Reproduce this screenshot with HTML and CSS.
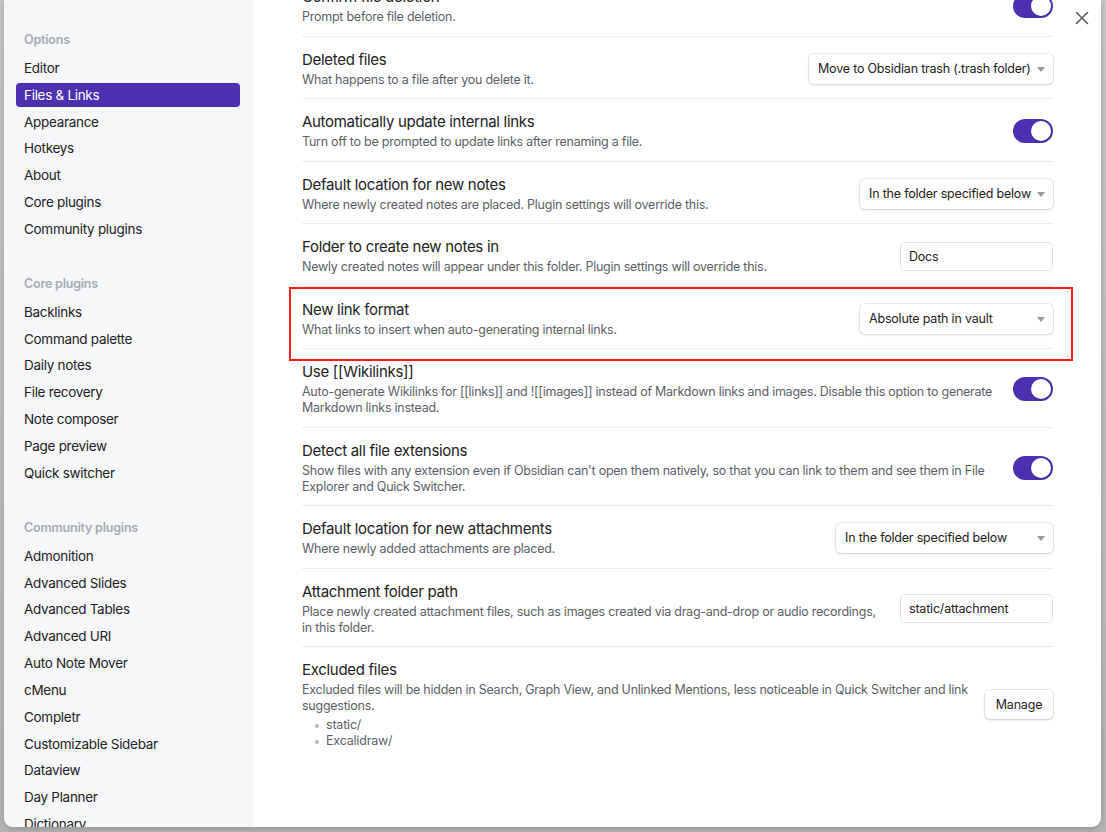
FILE: index.html
```html
<!DOCTYPE html>
<html lang="en">
<head>
<meta charset="utf-8">
<title>Settings - Files &amp; Links</title>
<link rel="stylesheet" href="styles.css">
</head>
<body>
<div class="backdrop">
  <div class="modal">
    <nav class="sidebar">
      <div class="nav-group">
        <div class="nav-header">Options</div>
        <div class="nav-item">Editor</div>
        <div class="nav-item active">Files &amp; Links</div>
        <div class="nav-item">Appearance</div>
        <div class="nav-item">Hotkeys</div>
        <div class="nav-item">About</div>
        <div class="nav-item">Core plugins</div>
        <div class="nav-item">Community plugins</div>
      </div>
      <div class="nav-group">
        <div class="nav-header">Core plugins</div>
        <div class="nav-item">Backlinks</div>
        <div class="nav-item">Command palette</div>
        <div class="nav-item">Daily notes</div>
        <div class="nav-item">File recovery</div>
        <div class="nav-item">Note composer</div>
        <div class="nav-item">Page preview</div>
        <div class="nav-item">Quick switcher</div>
      </div>
      <div class="nav-group">
        <div class="nav-header">Community plugins</div>
        <div class="nav-item">Admonition</div>
        <div class="nav-item">Advanced Slides</div>
        <div class="nav-item">Advanced Tables</div>
        <div class="nav-item">Advanced URI</div>
        <div class="nav-item">Auto Note Mover</div>
        <div class="nav-item">cMenu</div>
        <div class="nav-item">Completr</div>
        <div class="nav-item">Customizable Sidebar</div>
        <div class="nav-item">Dataview</div>
        <div class="nav-item">Day Planner</div>
        <div class="nav-item">Dictionary</div>
      </div>
    </nav>

    <main class="content">
      <div class="settings">
        <div class="setting">
          <div class="info">
            <div class="name">Confirm file deletion</div>
            <div class="desc">Prompt before file deletion.</div>
          </div>
          <div class="toggle on"><span class="knob"></span></div>
        </div>

        <div class="setting">
          <div class="info">
            <div class="name">Deleted files</div>
            <div class="desc">What happens to a file after you delete it.</div>
          </div>
          <div class="dropdown w-trash">Move to Obsidian trash (.trash folder)<span class="caret"></span></div>
        </div>

        <div class="setting">
          <div class="info">
            <div class="name">Automatically update internal links</div>
            <div class="desc">Turn off to be prompted to update links after renaming a file.</div>
          </div>
          <div class="toggle on"><span class="knob"></span></div>
        </div>

        <div class="setting">
          <div class="info">
            <div class="name">Default location for new notes</div>
            <div class="desc">Where newly created notes are placed. Plugin settings will override this.</div>
          </div>
          <div class="dropdown w-folder">In the folder specified below<span class="caret"></span></div>
        </div>

        <div class="setting">
          <div class="info">
            <div class="name">Folder to create new notes in</div>
            <div class="desc">Newly created notes will appear under this folder. Plugin settings will override this.</div>
          </div>
          <div class="text-input">Docs</div>
        </div>

        <div class="setting highlighted">
          <div class="info">
            <div class="name">New link format</div>
            <div class="desc">What links to insert when auto-generating internal links.</div>
          </div>
          <div class="dropdown w-folder">Absolute path in vault<span class="caret"></span></div>
          <div class="highlight-box"></div>
        </div>

        <div class="setting">
          <div class="info">
            <div class="name">Use [[Wikilinks]]</div>
            <div class="desc">Auto-generate Wikilinks for [[links]] and ![[images]] instead of Markdown links and images. Disable this option to generate Markdown links instead.</div>
          </div>
          <div class="toggle on"><span class="knob"></span></div>
        </div>

        <div class="setting">
          <div class="info">
            <div class="name">Detect all file extensions</div>
            <div class="desc">Show files with any extension even if Obsidian can't open them natively, so that you can link to them and see them in File Explorer and Quick Switcher.</div>
          </div>
          <div class="toggle on"><span class="knob"></span></div>
        </div>

        <div class="setting">
          <div class="info">
            <div class="name">Default location for new attachments</div>
            <div class="desc">Where newly added attachments are placed.</div>
          </div>
          <div class="dropdown w-attach">In the folder specified below<span class="caret"></span></div>
        </div>

        <div class="setting">
          <div class="info">
            <div class="name">Attachment folder path</div>
            <div class="desc">Place newly created attachment files, such as images created via drag-and-drop or audio recordings, in this folder.</div>
          </div>
          <div class="text-input">static/attachment</div>
        </div>

        <div class="setting last">
          <div class="info">
            <div class="name">Excluded files</div>
            <div class="desc">Excluded files will be hidden in Search, Graph View, and Unlinked Mentions, less noticeable in Quick Switcher and link suggestions.</div>
            <ul class="excluded">
              <li>static/</li>
              <li>Excalidraw/</li>
            </ul>
          </div>
          <div class="button">Manage</div>
        </div>
      </div>
    </main>

    <div class="close" aria-label="Close">
      <svg width="14" height="14" viewBox="0 0 14 14"><path d="M1.5 1.5 L12.5 12.5 M12.5 1.5 L1.5 12.5" stroke="#5c5c5c" stroke-width="1.6" stroke-linecap="round" fill="none"/></svg>
    </div>
  </div>
</div>
</body>
</html>
```

FILE: styles.css
```css
* { box-sizing: border-box; }

html, body {
  margin: 0;
  padding: 0;
  width: 1106px;
  height: 832px;
  overflow: hidden;
}

body {
  font-family: Inter, "Noto Sans", sans-serif;
  color: #222;
  background: #b9b9b9;
}

.backdrop {
  height: 832px;
  padding: 0 5px 5px 4px;
  background: linear-gradient(#c6c6c6, #b4b4b4);
}

.modal {
  position: relative;
  height: 827px;
  display: flex;
  background: #fff;
  border-radius: 0 0 9px 9px;
  overflow: hidden;
  box-shadow: 0 2px 6px rgba(0,0,0,0.18);
}

/* Sidebar */
.sidebar {
  width: 249px;
  flex: none;
  background: #f6f7f9;
  padding: 30px 13px 0 12px;
  display: flex;
  flex-direction: column;
  gap: 33px;
  overflow: hidden;
}

.nav-group {
  display: flex;
  flex-direction: column;
  gap: 2.85px;
}

.nav-header {
  font-size: 12.5px;
  line-height: 20px;
  font-weight: 600;
  letter-spacing: -0.2px;
  color: #a5abb3;
  padding: 0 8px;
  margin-bottom: 3px;
}

.nav-item {
  font-size: 13.5px;
  letter-spacing: -0.3px;
  line-height: 24px;
  height: 24px;
  padding: 0 8px;
  border-radius: 4px;
  color: #222;
  white-space: nowrap;
}

.nav-item.active {
  background: #4c30b0;
  color: #fff;
}

/* Content */
.content {
  flex: 1;
  padding: 0 48px 0 49px;
  overflow: hidden;
}

.settings {
  margin-top: -26px;
}

.setting {
  position: relative;
  display: flex;
  align-items: center;
  padding: 13px 0 10.5px;
  border-bottom: 1px solid #ececec;
}

.setting.last {
  border-bottom: none;
}

.info {
  flex: 1;
  min-width: 0;
  margin-right: 15px;
}

.name {
  font-size: 15px;
  letter-spacing: -0.3px;
  line-height: 20px;
  color: #222;
}

.desc {
  margin-top: 2px;
  font-size: 12.5px;
  letter-spacing: -0.25px;
  line-height: 16px;
  color: #5c5f66;
}

.excluded {
  margin: 3px 0 0;
  padding: 0 0 0 24px;
  font-size: 12.5px;
  letter-spacing: -0.2px;
  line-height: 16px;
  color: #5c5f66;
  list-style: none;
}

.excluded li {
  position: relative;
}

.excluded li::before {
  content: "";
  position: absolute;
  left: -11px;
  top: 7px;
  width: 4px;
  height: 4px;
  border-radius: 50%;
  background: #b3b6bb;
}

/* Controls */
.toggle {
  flex: none;
  width: 40px;
  height: 24px;
  border-radius: 12px;
  background: #4c30b0;
  position: relative;
}

.toggle .knob {
  position: absolute;
  top: 2px;
  right: 2px;
  width: 20px;
  height: 20px;
  border-radius: 50%;
  background: #fff;
  box-shadow: 0 1px 2px rgba(0,0,0,0.15);
}

.dropdown {
  flex: none;
  position: relative;
  height: 30px;
  line-height: 30px;
  padding: 0 28px 0 9px;
  font-size: 12.5px;
  letter-spacing: -0.2px;
  color: #222;
  background: #fff;
  border-radius: 5px;
  box-shadow: 0 0 0 1px rgba(0,0,0,0.07), 0 1px 3px rgba(0,0,0,0.12);
  white-space: nowrap;
}

.w-trash { width: 244px; }
.w-folder { width: 193px; }
.w-attach { width: 217px; }

.caret {
  position: absolute;
  right: 8px;
  top: 13px;
  width: 0;
  height: 0;
  border-left: 4.5px solid transparent;
  border-right: 4.5px solid transparent;
  border-top: 5px solid #9a9a9a;
}

.text-input {
  flex: none;
  width: 153px;
  height: 29px;
  line-height: 27px;
  padding: 0 8px;
  font-size: 12.5px;
  letter-spacing: -0.2px;
  color: #222;
  background: #fff;
  border: 1px solid #e4e4e4;
  border-radius: 5px;
}

.button {
  flex: none;
  width: 68px;
  height: 29px;
  line-height: 29px;
  text-align: center;
  font-size: 12.5px;
  letter-spacing: -0.2px;
  color: #222;
  background: #fff;
  border-radius: 5px;
  box-shadow: 0 0 0 1px rgba(0,0,0,0.07), 0 1px 3px rgba(0,0,0,0.14);
}

.highlight-box {
  position: absolute;
  left: -13px;
  right: -20px;
  top: 0;
  bottom: -13px;
  border: 2px solid #ff1c1c;
  pointer-events: none;
}

.close {
  position: absolute;
  top: 11px;
  right: 12px;
  width: 14px;
  height: 14px;
}

.close svg { display: block; }
```
